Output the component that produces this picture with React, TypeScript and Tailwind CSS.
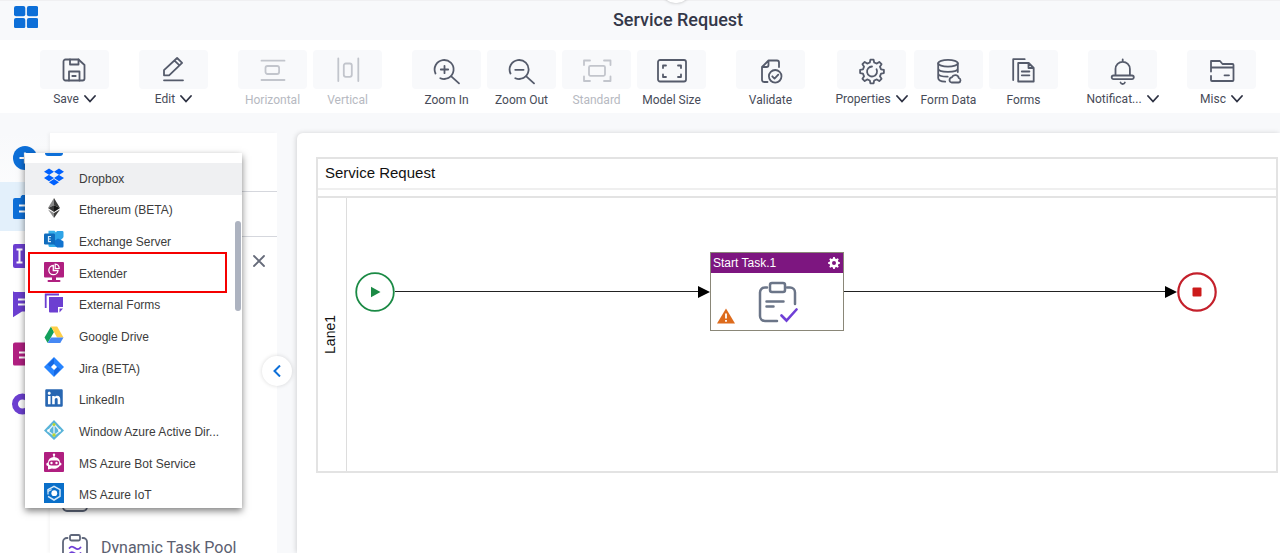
import { useState } from "react";
import type { ReactNode } from "react";
import { FaDropbox, FaLinkedin } from "react-icons/fa";

interface Tool {
  label: string;
  icon: ReactNode;
  menu?: boolean;
  disabled?: boolean;
  wide?: boolean;
}

interface Connector {
  label: string;
  icon: ReactNode;
}

const gearPath = (cx: number, cy: number, outer: number, inner: number, teeth: number) => {
  const step = (Math.PI * 2) / teeth;
  const pts: string[] = [];
  for (let i = 0; i < teeth; i++) {
    const a = i * step - Math.PI / 2;
    [[-0.3, inner], [-0.17, outer], [0.17, outer], [0.3, inner]].forEach(([k, r]) => {
      pts.push(`${(cx + Math.cos(a + k * step) * r).toFixed(2)} ${(cy + Math.sin(a + k * step) * r).toFixed(2)}`);
    });
  }
  return `M${pts.join("L")}Z`;
};

function Stroke({ children }: { children: ReactNode }) {
  return (
    <svg
      className="w-7 h-7 overflow-visible"
      viewBox="0 0 28 28"
      fill="none"
      stroke="currentColor"
      strokeWidth={1.8}
      strokeLinecap="round"
      strokeLinejoin="round"
    >
      {children}
    </svg>
  );
}

const groups: Tool[][] = [
  [
    {
      label: "Save",
      menu: true,
      icon: (
        <Stroke>
          <path d="M4.5 3.5H17.5L23.5 9V22.5a2 2 0 0 1-2 2h-17a2 2 0 0 1-2-2v-17a2 2 0 0 1 2-2z" />
          <path d="M9 3.5V8.5h8.5V3.5M8 24.5V15.500h10.500v9M11.300 20h3.400" />
        </Stroke>
      ),
    },
  ],
  [
    {
      label: "Edit",
      menu: true,
      icon: (
        <Stroke>
          <path d="M4 19.3v-5.2L17.1 2l5 4.800L9.100 19.300zM14.500 4.600l5 4.800M4 24.300H23" />
        </Stroke>
      ),
    },
  ],
  [
    {
      label: "Horizontal",
      disabled: true,
      icon: (
        <Stroke>
          <path d="M2.5 4.7H25.5M2.5 24H25.5" />
          <rect x="6.5" y="10" width="13.6" height="8" rx="2" />
        </Stroke>
      ),
    },
    {
      label: "Vertical",
      disabled: true,
      icon: (
        <Stroke>
          <path d="M4.3 2.5V25M24.3 2.5V25" />
          <rect x="9.8" y="7.5" width="8" height="13.3" rx="2" />
        </Stroke>
      ),
    },
  ],
  [
    {
      label: "Zoom In",
      icon: (
        <Stroke>
          <path d="M2.5 17.5A9.5 9.5 0 1 1 7.3 22.2M11.4 22.9A9.5 9.5 0 0 0 18 20.1L26 27.4M7.8 13.5h7.4M11.5 9.8v7.4" />
        </Stroke>
      ),
    },
    {
      label: "Zoom Out",
      icon: (
        <Stroke>
          <path d="M2.5 17.5A9.5 9.5 0 1 1 7.3 22.2M11.4 22.9A9.5 9.5 0 0 0 18 20.1L26 27.4M7.2 13.8h8.4" />
        </Stroke>
      ),
    },
    {
      label: "Standard",
      disabled: true,
      icon: (
        <Stroke>
          <path d="M1 9V4.5H7M21 4.5h6.5V9M27.5 20.5V25H21M7 25H1v-4.5" />
          <rect x="6" y="9.8" width="16" height="10" rx="1.5" />
        </Stroke>
      ),
    },
    {
      label: "Model Size",
      icon: (
        <Stroke>
          <rect x="0" y="4" width="28" height="21.5" rx="2" />
          <path d="M5 12V9.5h3M20 9.5h3V12M23 18.5V21h-3M8 21H5v-2.5" />
        </Stroke>
      ),
    },
  ],
  [
    {
      label: "Validate",
      icon: (
        <Stroke>
          <path d="M10.5 26H7a2 2 0 0 1-2-2V11l6.5-6.5H20a2 2 0 0 1 2 2V11M5 11h4.5a2 2 0 0 0 2-2V4.5" />
          <circle cx="18.2" cy="20.3" r="6.3" />
          <path d="M15.3 20.3l2.2 2.300 3.800-4" />
        </Stroke>
      ),
    },
  ],
  [
    {
      label: "Properties",
      menu: true,
      wide: true,
      icon: (
        <Stroke>
          <path d={gearPath(14, 15.5, 12, 9.3, 8)} />
          <path d="M18.500 13.200A5 5 0 1 1 14 10.500M18.800 17.200A5 5 0 0 1 17 19.500" />
        </Stroke>
      ),
    },
    {
      label: "Form Data",
      icon: (
        <Stroke>
          <ellipse cx="13" cy="7.3" rx="9.8" ry="3.4" />
          <path d="M3.2 7.3V22c0 2 3 3.5 7 3.7M22.8 7.3V16M3.2 12.5c0 4.5 19.6 4.5 19.6 0M3.2 17.5c0 2.200 4.500 3.400 9.500 3.200" />
          <path d="M16.5 26.5h7a2.3 2.3 0 0 0 .3-4.5a3.7 3.7 0 0 0-7-.6a2.600 2.600 0 0 0-.3 5.100z" />
        </Stroke>
      ),
    },
    {
      label: "Forms",
      icon: (
        <Stroke>
          <path d="M14.7 3.2H3.2V24" />
          <path d="M8.2 7h10.5l5 5V25.5H8.2zM18.5 7v5h5M11.8 15.5h7.6M11.8 19.3h7.6" />
        </Stroke>
      ),
    },
  ],
  [
    {
      label: "Notificat...",
      menu: true,
      icon: (
        <Stroke>
          <path d="M13.7 3.5v2M6.5 19.5V13a7.2 7.2 0 0 1 14.4 0v6.5M4.5 19.5h18.5a1.8 1.8 0 0 1 0 3.6h-18.5a1.800 1.800 0 0 1 0-3.600zM11.500 26.500c.8 2 3.600 2 4.400 0" />
        </Stroke>
      ),
    },
  ],
  [
    {
      label: "Misc",
      menu: true,
      icon: (
        <Stroke>
          <path d="M3 15.500V11.500h22.500V24a1 1 0 0 1-1 1H4a1 1 0 0 1-1-1v-4M3 11.500V5h9l2.500 3H24.500a1 1 0 0 1 1 1v2.500M16.500 19.300h4.500" />
        </Stroke>
      ),
    },
  ],
];

const connectors: Connector[] = [
  { label: "Dropbox", icon: <FaDropbox className="w-5 h-5 text-[#0061fe]" /> },
  {
    label: "Ethereum (BETA)",
    icon: (
      <svg className="w-5 h-5" viewBox="0 0 20 20">
        <path d="M10 0L4 10l6-2.7z" fill="#8a8a8a" />
        <path d="M10 0l6 10-6-2.7z" fill="#3c3c3b" />
        <path d="M4 10l6-2.7V14z" fill="#393939" />
        <path d="M16 10l-6-2.7V14z" fill="#141414" />
        <path d="M4 11.5l6 3.5v5z" fill="#8c8c8c" />
        <path d="M16 11.5l-6 3.5v5z" fill="#3c3c3b" />
      </svg>
    ),
  },
  {
    label: "Exchange Server",
    icon: (
      <svg className="w-5 h-5" viewBox="0 0 20 20">
        <path d="M4.500 .8h6L15 6v11h-9a1.500 1.500 0 0 1-1.500-1.500z" fill="#37b0ea" />
        <path d="M12.500 1.500a1 1 0 0 1 .8-.5h5a1.200 1.200 0 0 1 1.200 1.200v4.300a2 2 0 0 1-.6 1.500L14.500 12 9 8.500z" fill="#2fa4e7" />
        <path d="M14 8.500l5 2.500a1 1 0 0 1 .5 1v4.300a1.200 1.200 0 0 1-1.200 1.200h-4.500a2 2 0 0 1-1.300-.6L8 12.500z" fill="#1173cf" />
        <rect x="0" y="3.500" width="11" height="11" rx="1.200" fill="#0f6cbd" />
        <path d="M7 6.500H4.500v5.200H7M4.500 9H6.700" fill="none" stroke="#d9ecfa" strokeWidth="1.200" />
      </svg>
    ),
  },
  {
    label: "Extender",
    icon: (
      <svg className="w-5 h-5" viewBox="0 0 20 20">
        <rect width="20" height="15.5" rx="1" fill="#b01f80" />
        <path d="M8 15h4v3h3.5a1 1 0 0 1 0 2h-11a1 1 0 0 1 0-2H8z" fill="#b01f80" />
        <path d="M9.300 3.500A4.600 4.600 0 1 0 14 8.500H9.300z" fill="none" stroke="#fff" strokeWidth="1.300" />
        <path d="M11.200 2.200a4.300 4.300 0 0 1 4 4.300h-4z" fill="none" stroke="#fff" strokeWidth="1.200" />
      </svg>
    ),
  },
  {
    label: "External Forms",
    icon: (
      <svg className="w-5 h-5" viewBox="0 0 20 20">
        <path d="M1.7 15V1.5H15" fill="none" stroke="#6c3fd1" strokeWidth="1.8" />
        <path d="M5 4h14v10h-5v5.500H6a1 1 0 0 1-1-1z" fill="#6c3fd1" />
        <path d="M15.500 19.500v-4H19z" fill="#6c3fd1" />
      </svg>
    ),
  },
  {
    label: "Google Drive",
    icon: (
      <svg className="w-5 h-5" viewBox="0 0 20 20">
        <path d="M7 1.5L.5 12.5l3.2 5.500L10 7z" fill="#13a05c" />
        <path d="M7 1.5h6.200l6.300 11H13z" fill="#ffcf48" />
        <path d="M7 12.5h12.500L16.300 18H3.700z" fill="#4688f4" />
      </svg>
    ),
  },
  {
    label: "Jira (BETA)",
    icon: (
      <svg className="w-5 h-5" viewBox="0 0 20 20">
        <path d="M10 0l10 10-10 10L0 10z" fill="#2684ff" />
        <path d="M10 1v5.500L6.500 10 3.500 7.500z" fill="#1668e3" />
        <path d="M10 19v-5.500l3.500-3.500 3 2.500z" fill="#1668e3" />
        <path d="M10 7l3 3-3 3-3-3z" fill="#fff" />
      </svg>
    ),
  },
  { label: "LinkedIn", icon: <FaLinkedin className="w-5 h-5 text-[#2867b2]" /> },
  {
    label: "Window Azure Active Dir...",
    icon: (
      <svg className="w-5 h-5" viewBox="0 0 20 20">
        <path d="M10 0l10 10.5L10 20 0 10.5z" fill="#59b4d9" />
        <path d="M10 3.5v13M10 4l-6 7 6 4.500M10 4l6 7-6 4.500" fill="none" stroke="#e4f4fa" strokeWidth="1.3" />
        <circle cx="10" cy="4.5" r="1.5" fill="#b8d432" />
        <circle cx="10" cy="15" r="1.7" fill="#b8d432" />
        <circle cx="4.5" cy="10.5" r="1.3" fill="#fff" />
        <circle cx="15.5" cy="10.5" r="1.3" fill="#fff" />
      </svg>
    ),
  },
  {
    label: "MS Azure Bot Service",
    icon: (
      <svg className="w-5 h-5" viewBox="0 0 20 20">
        <rect width="20" height="20" rx="1" fill="#b01f80" />
        <path d="M10 2.5V6" stroke="#fff" strokeWidth="1.2" />
        <circle cx="10" cy="2.7" r="1.2" fill="#fff" />
        <path d="M4 10.5a6 5.500 0 0 1 12 0a1.500 1.500 0 0 1 0 3a6.500 5 0 0 1-8 3L4 17.500V14a1.500 1.500 0 0 1 0-3.500z" fill="#fff" />
        <rect x="4.8" y="8.5" width="10.4" height="5" rx="2.5" fill="#b01f80" />
        <circle cx="7.5" cy="11" r="1.2" fill="#fff" />
        <circle cx="12.5" cy="11" r="1.2" fill="#fff" />
      </svg>
    ),
  },
  {
    label: "MS Azure IoT",
    icon: (
      <svg className="w-5 h-5" viewBox="0 0 20 20">
        <rect width="20" height="20" fill="#0a6fc9" />
        <path d="M4 8.500V6.700L10 3.300l6 3.400v6.600L10 17 4 13.300" fill="none" stroke="#d5e8f8" strokeWidth="1.500" />
        <path d="M4 11.500V8.500L7.500 6.500" fill="none" stroke="#d5e8f8" strokeWidth="1.200" />
        <circle cx="10.300" cy="10.200" r="2.900" fill="#fff" />
      </svg>
    ),
  },
];

const railItems: Connector[] = [
  {
    label: "Add",
    icon: (
      <svg className="w-6 h-6" viewBox="0 0 24 24">
        <circle cx="12" cy="12" r="12" fill="#0d6fd8" />
        <path d="M12 6.5v11M6.5 12h11" stroke="#fff" strokeWidth="2.2" />
      </svg>
    ),
  },
  {
    label: "Tasks",
    icon: (
      <svg className="w-6 h-6" viewBox="0 0 24 24">
        <path d="M2 3h5.500a4.500 3.500 0 0 1 9 0H22V24H1.500A1.500 1.500 0 0 1 0 22.500V5a2 2 0 0 1 2-2z" fill="#0d6fd8" />
        <path d="M6 10.5h12M6 16.500h9" stroke="#fff" strokeWidth="2" />
      </svg>
    ),
  },
  {
    label: "Fields",
    icon: (
      <svg className="w-6 h-6" viewBox="0 0 24 24">
        <rect width="24" height="24" rx="2" fill="#6c3fd1" />
        <path d="M3.5 5.5h6M3.5 18.5h6M6.5 5.5v13" stroke="#fff" strokeWidth="2" />
      </svg>
    ),
  },
  {
    label: "Messages",
    icon: (
      <svg className="w-6 h-7" viewBox="0 0 24 28">
        <path d="M1.5 1h21a1.5 1.5 0 0 1 1.5 1.5v18H9L-1 27V2.5A1.500 1.500 0 0 1 1.500 1z" fill="#6c3fd1" />
        <path d="M5 8.5h14M5 13.5h14" stroke="#fff" strokeWidth="1.8" />
      </svg>
    ),
  },
  {
    label: "Documents",
    icon: (
      <svg className="w-6 h-6" viewBox="0 0 24 24">
        <path d="M2 .5h14l6 6V22a1.500 1.500 0 0 1-1.500 1.500h-19A1.500 1.500 0 0 1 0 22V2.500a2 2 0 0 1 2-2z" fill="#b01f80" />
        <path d="M6 10.5h12M6 15.5h12" stroke="#fff" strokeWidth="1.8" />
      </svg>
    ),
  },
  {
    label: "Events",
    icon: (
      <svg className="w-6 h-6 overflow-visible" viewBox="0 0 24 24">
        <circle cx="9.500" cy="13" r="7.500" fill="none" stroke="#6c3fd1" strokeWidth="6" />
      </svg>
    ),
  },
];

function Chevron() {
  return (
    <svg className="w-3 h-2 shrink-0" viewBox="0 0 12 8" fill="none" stroke="#2d3142" strokeWidth={1.8} strokeLinecap="round">
      <path d="M1 1l5 5.5L11 1" />
    </svg>
  );
}

function ToolButton({ tool }: { tool: Tool }) {
  return (
    <button
      type="button"
      disabled={tool.disabled}
      className={`flex flex-col items-center text-[#555b6b] disabled:text-[#c2c5cc] ${tool.wide ? "w-[73px]" : "w-[69px]"}`}
    >
      <span className="flex items-center justify-center w-[69px] h-[39px] rounded bg-[#f8f9fb]">{tool.icon}</span>
      <span
        className={`flex items-center gap-[5px] text-xs whitespace-nowrap ${tool.menu ? "mt-0.5" : "mt-[3px]"} ${
          tool.disabled ? "text-[#b6b9c1]" : "text-[#474b58]"
        }`}
      >
        <span>{tool.label}</span>
        {tool.menu && <Chevron />}
      </span>
    </button>
  );
}

function TaskIcon({ mark }: { mark: ReactNode }) {
  return (
    <svg className="w-[26px] h-7 shrink-0" viewBox="0 0 26 28" fill="none" stroke="#5f677b" strokeWidth={1.8} strokeLinecap="round">
      <path d="M5.500 4H5a4 4 0 0 0-4 4v15a4 4 0 0 0 4 4h16a4 4 0 0 0 4-4V8a4 4 0 0 0-4-4h-.5" />
      <rect x="8" y="1" width="10" height="5.5" rx="1.5" />
      {mark}
    </svg>
  );
}

function ConnectorMenu() {
  const [active, setActive] = useState("Dropbox");

  return (
    <div className="absolute left-[25px] top-10 z-20 w-[217px] h-[355px] overflow-hidden bg-white shadow-[0_3px_7px_rgba(0,0,0,0.5)]">
      <div className="h-2.5 pl-5">
        <div className="w-[18px] h-[3px] rounded-b bg-[#0d6fd8]" />
      </div>
      <ul className="grid auto-rows-fr h-[348px]">
        {connectors.map((item) => (
          <li key={item.label} className={active === item.label ? "bg-[#eff0f2]" : "bg-white"}>
            <button
              type="button"
              onMouseEnter={() => setActive(item.label)}
              className="flex items-center gap-[15px] w-full h-full pl-[19px] text-left text-xs text-[#3c3c3c] font-['Liberation_Sans',Arial,sans-serif]"
            >
              <span className="w-5 h-5 mb-1 shrink-0">{item.icon}</span>
              <span className="whitespace-nowrap">{item.label}</span>
            </button>
          </li>
        ))}
      </ul>
      <div className="absolute right-px top-[68px] w-1.5 h-[90px] rounded-full bg-[#adb3c0]" />
      <div className="absolute left-[3px] top-[99px] w-[199px] h-[41px] border-2 border-[#f50000] pointer-events-none" />
    </div>
  );
}

function Arrow() {
  return (
    <div className="flex items-center flex-1">
      <div className="flex-1 h-px bg-[#222222]" />
      <svg className="w-3 h-3" viewBox="0 0 12 12">
        <path d="M0 0l12 6-12 6z" fill="#000" />
      </svg>
    </div>
  );
}

function Diagram() {
  return (
    <section className="flex flex-col h-[316px] border-2 border-[#e3e3e3] text-[#111111] font-['Liberation_Sans',Arial,sans-serif]">
      <h2 className="h-[29px] pl-[7px] text-[15px] leading-7">Service Request</h2>
      <div className="h-2.5 border-t-2 border-b-2 border-t-[#efefef] border-b-[#e3e3e3]" />
      <div className="flex flex-1">
        <div className="flex items-center justify-center w-[29px] pr-1 border-r border-[#dddddd]">
          <span className="[writing-mode:vertical-rl] rotate-180 text-sm">Lane1</span>
        </div>
        <div className="flex items-center flex-1 h-[79px] mt-[54px] pl-2 pr-[59px]">
          <svg className="w-10 h-10 shrink-0" viewBox="0 0 40 40">
            <circle cx="20" cy="20" r="18.8" fill="#fff" stroke="#1b8a45" strokeWidth="1.8" />
            <path d="M16 14.800l9.500 5.200-9.500 5.200z" fill="#1b8a45" />
          </svg>
          <div className="flex w-[315px]">
            <Arrow />
          </div>
          <div className="w-[134px] h-[79px] border border-[#8a8778] bg-white">
            <div className="flex items-center justify-between h-5 pl-0.5 pr-[3px] bg-[#7d1680] text-white text-xs">
              <span>Start Task.1</span>
              <svg className="w-3 h-3" viewBox="0 0 12 12">
                <path d={gearPath(6, 6, 6, 4.6, 8)} fill="#fff" />
                <circle cx="6" cy="6" r="2" fill="#7d1680" />
              </svg>
            </div>
            <div className="flex items-end h-[57px] pl-1.5">
              <svg className="w-[18px] h-4 mb-1.5" viewBox="0 0 18 16">
                <path d="M9 .5L18 15.5H0z" fill="#dd6b1c" />
                <path d="M9 5.5v5M9 12v1.800" stroke="#fff" strokeWidth="1.8" />
              </svg>
              <svg className="w-10 h-[42px] ml-[23px] mb-[7px]" viewBox="0 0 40 42" fill="none" stroke="#6b7588" strokeWidth="2.5" strokeLinecap="round">
                <path d="M9 6.5H7a5 5 0 0 0-5 5V35a5 5 0 0 0 5 5h12M29 6.5h3a5 5 0 0 1 5 5V23" />
                <rect x="12" y="2" width="15" height="9" rx="2" />
                <path d="M8.500 20.500h17M8.500 25.500h7" />
                <path d="M23.500 34.500l5 5 10-11" stroke="#6f3fd6" strokeWidth="2.600" />
              </svg>
            </div>
          </div>
          <Arrow />
          <svg className="w-10 h-10 shrink-0" viewBox="0 0 40 40">
            <circle cx="20" cy="20" r="18.7" fill="#fff" stroke="#c4202b" strokeWidth="2.2" />
            <rect x="15.5" y="15.5" width="9" height="9" rx="1" fill="#cc1a1a" />
          </svg>
        </div>
      </div>
    </section>
  );
}

export default function App() {
  return (
    <div className="flex flex-col h-screen overflow-hidden bg-[#f8f9fb] font-[Roboto,sans-serif]">
      <header className="relative flex items-center h-10 shrink-0 border-t border-[#f0f0f2]">
        <div className="absolute left-1/2 -top-6 w-7 h-[26px] ml-[22px] rounded-full bg-white shadow-sm" />
        <a href="#" aria-label="Home" className="w-[76px] pl-[14px] pb-2">
          <svg className="w-6 h-[22px]" viewBox="0 0 24 22" fill="#0d6fd8">
            <rect width="11.3" height="10.3" rx="2" />
            <rect x="12.9" width="11.3" height="10.3" rx="2" />
            <rect y="11.9" width="11.3" height="10.3" rx="2" />
            <rect x="12.9" y="11.9" width="11.3" height="10.3" rx="2" />
          </svg>
        </a>
        <h1 className="flex-1 pb-px text-center text-lg font-medium text-[#343849]">Service Request</h1>
      </header>

      <nav className="flex gap-[30px] h-[73px] shrink-0 pt-2.5 pl-10 bg-white">
        {groups.map((group, index) => (
          <div key={index} className="flex items-start gap-1.5">
            {group.map((tool) => (
              <ToolButton key={tool.label} tool={tool} />
            ))}
          </div>
        ))}
      </nav>

      <main className="relative flex flex-1 min-h-0 pt-5">
        <aside className="w-[50px] shrink-0 bg-[linear-gradient(#f8f9fb,#ffffff_100px)]">
          {railItems.map((item) => (
            <button
              key={item.label}
              type="button"
              aria-label={item.label}
              className={`flex items-center w-full h-[49px] pl-[13px] ${item.label === "Tasks" ? "bg-[#e3f0fb]" : ""}`}
            >
              {item.icon}
            </button>
          ))}
        </aside>

        <ConnectorMenu />

        <aside className="relative w-[227px] shrink-0 bg-white shadow-[-2px_0_3px_rgba(0,0,0,0.04)]">
          <div className="h-[59px] border-b border-[#d5d7dd]" />
          <div className="h-[45px] border-b border-[#d5d7dd]" />
          <div className="flex justify-end pt-[18px] pr-3">
            <button type="button" aria-label="Close">
              <svg className="w-3 h-3" viewBox="0 0 12 12" stroke="#666b7a" strokeWidth={1.8} strokeLinecap="round">
                <path d="M1 1l10 10M11 1L1 11" />
              </svg>
            </button>
          </div>
          <ul className="pt-[206px] pl-3 text-base text-[#5b6070]">
            <li className="flex items-center h-[50px]">
              <TaskIcon mark={<path d="M7 14h12" />} />
            </li>
            <li className="flex items-center gap-[13px] h-[50px]">
              <TaskIcon
                mark={<path d="M7.500 14c2-2.500 3.500-1.500 5.500 0s3.500 2 5.500-.5M7.500 19.500c2-2.500 3.500-1.500 5.500 0s3.500 2 5.500-.5" stroke="#6f3fd6" />}
              />
              <span>Dynamic Task Pool</span>
            </li>
          </ul>
          <button
            type="button"
            aria-label="Collapse panel"
            className="absolute -right-[15px] top-[223px] z-30 flex items-center justify-center w-[30px] h-[30px] rounded-full bg-white shadow-[0_0_4px_rgba(0,0,0,0.15)]"
          >
            <svg className="w-2 h-3" viewBox="0 0 8 12" fill="none" stroke="#0d6fd8" strokeWidth={2}>
              <path d="M7 .5L1.5 6 7 11.5" />
            </svg>
          </button>
        </aside>

        <div className="flex-1 ml-5 pt-6 pl-[19px] pr-0.5 rounded-tl-md bg-white shadow-[-1px_0_5px_rgba(0,0,0,0.15)]">
          <Diagram />
        </div>
      </main>
    </div>
  );
}
